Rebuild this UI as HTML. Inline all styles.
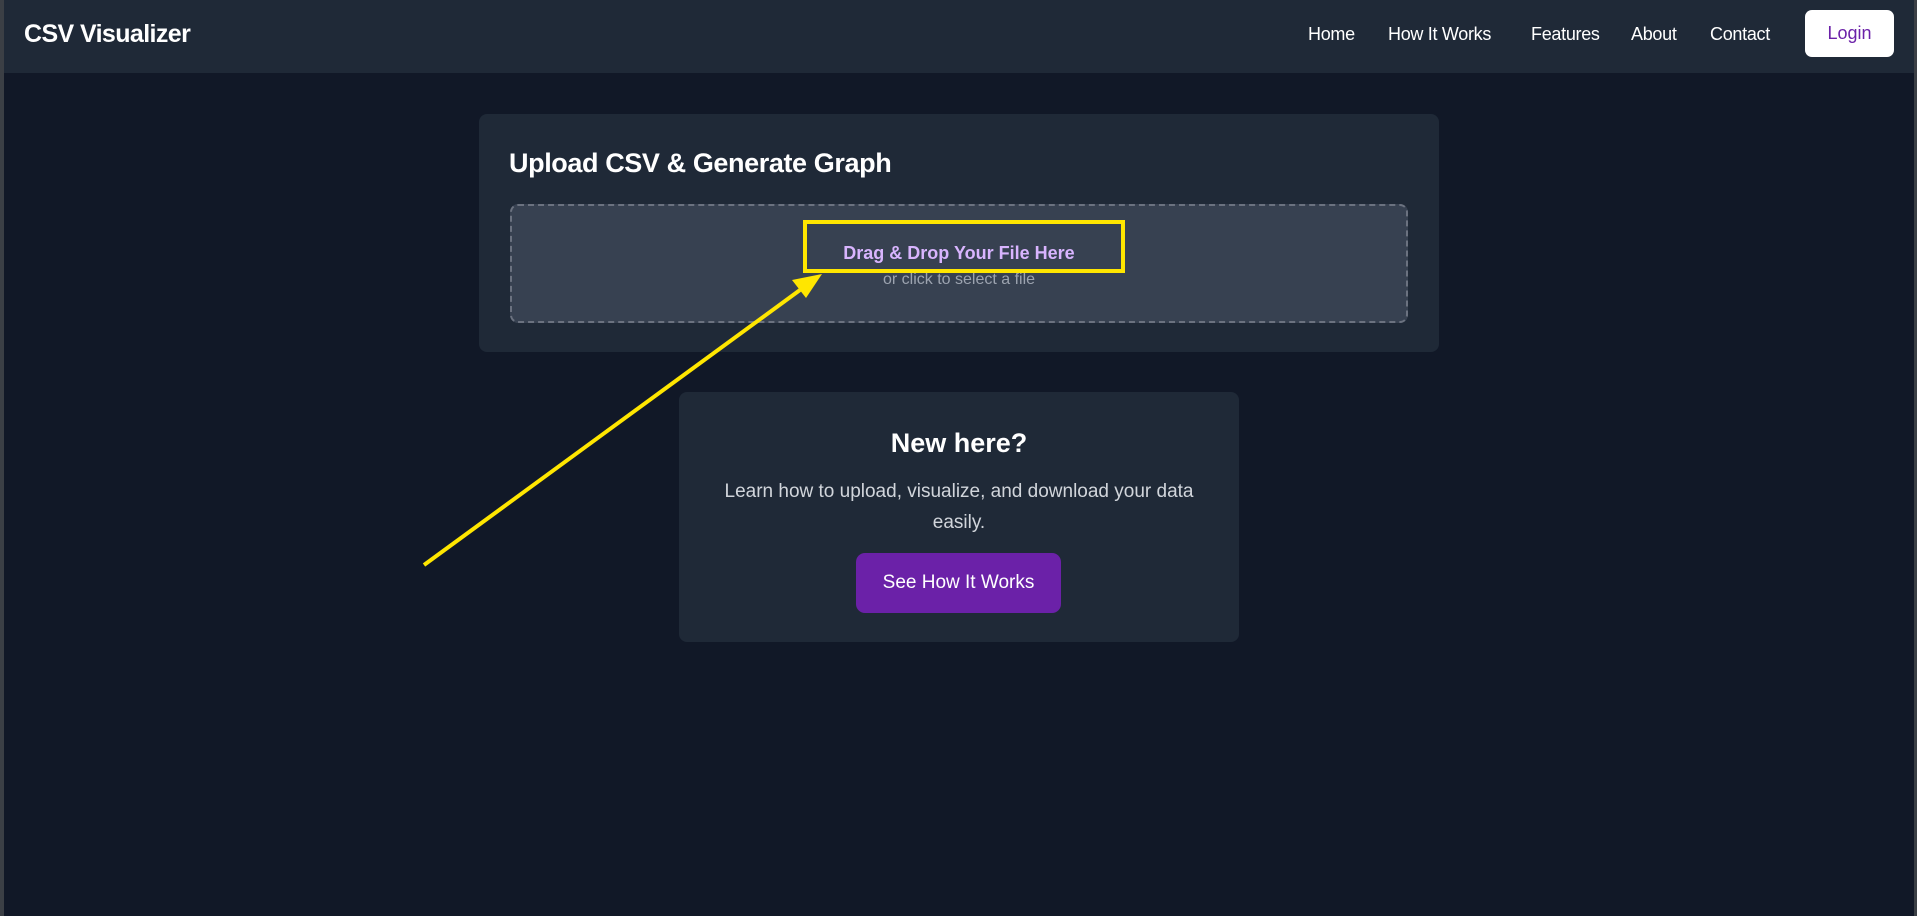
<!DOCTYPE html>
<html><head><meta charset="utf-8"><style>
*{margin:0;padding:0;box-sizing:border-box}
html,body{width:1917px;height:916px;overflow:hidden}
body{background:#111827;font-family:"Liberation Sans",sans-serif;position:relative}
.nav{position:absolute;left:0;top:0;width:1917px;height:73px;background:#1f2937}
.logo{position:absolute;left:24px;top:20px;font-size:25px;font-weight:bold;color:#fff;letter-spacing:-0.6px}
.links{position:absolute;top:24px;font-size:18px;color:#fff;letter-spacing:-0.3px}
.links span{position:absolute;white-space:nowrap}
.login{position:absolute;left:1805px;top:10px;width:89px;height:47px;background:#fff;border-radius:7px;color:#6b21a8;font-size:18px;text-align:center;line-height:47px}
.card{position:absolute;background:#1f2937;border-radius:8px}
</style></head><body>
<div class="nav">
<div class="logo">CSV Visualizer</div>
<div class="links">
<span style="left:1308px">Home</span>
<span style="left:1388px">How It Works</span>
<span style="left:1531px">Features</span>
<span style="left:1631px">About</span>
<span style="left:1710px">Contact</span>
</div>
<div class="login">Login</div>
</div>
<div class="card" style="left:479px;top:114px;width:960px;height:238px">
<div style="position:absolute;left:30px;top:34px;font-size:27px;font-weight:bold;color:#fff;letter-spacing:-0.4px">Upload CSV &amp; Generate Graph</div>
<div style="position:absolute;left:31px;top:90px;width:898px;height:119px;background:#374151;border:2px dashed #6b7280;border-radius:8px">
<div style="position:absolute;left:0;width:100%;top:37px;text-align:center;font-size:18px;font-weight:bold;color:#d8b4fe">Drag &amp; Drop Your File Here</div>
<div style="position:absolute;left:0;width:100%;top:65px;text-align:center;font-size:16px;color:#9ca3af">or click to select a file</div>
</div>
</div>
<div class="card" style="left:679px;top:392px;width:560px;height:250px;text-align:center">
<div style="position:absolute;left:0;width:100%;top:36px;font-size:27px;font-weight:bold;color:#fff">New here?</div>
<div style="position:absolute;left:30px;width:500px;top:84px;font-size:19px;line-height:31px;color:#d1d5db">Learn how to upload, visualize, and download your data easily.</div>
<div style="position:absolute;left:177px;top:161px;width:205px;height:60px;background:#6b21a8;border-radius:9px;color:#fff;font-size:19px;line-height:60px">See How It Works</div>
</div>
<div style="position:absolute;left:0;top:0;width:4px;height:916px;background:#3b3f45"></div>
<div style="position:absolute;right:0;top:0;width:3px;height:916px;background:#3b3f45"></div>
<svg style="position:absolute;left:0;top:0" width="1917" height="916">
<rect x="805" y="222" width="318" height="49" fill="none" stroke="#ffe600" stroke-width="4"/>
<line x1="424" y1="565" x2="800" y2="290" stroke="#ffe600" stroke-width="4"/>
<polygon points="822,274 792,280 806,298" fill="#ffe600"/>
</svg>
</body></html>
